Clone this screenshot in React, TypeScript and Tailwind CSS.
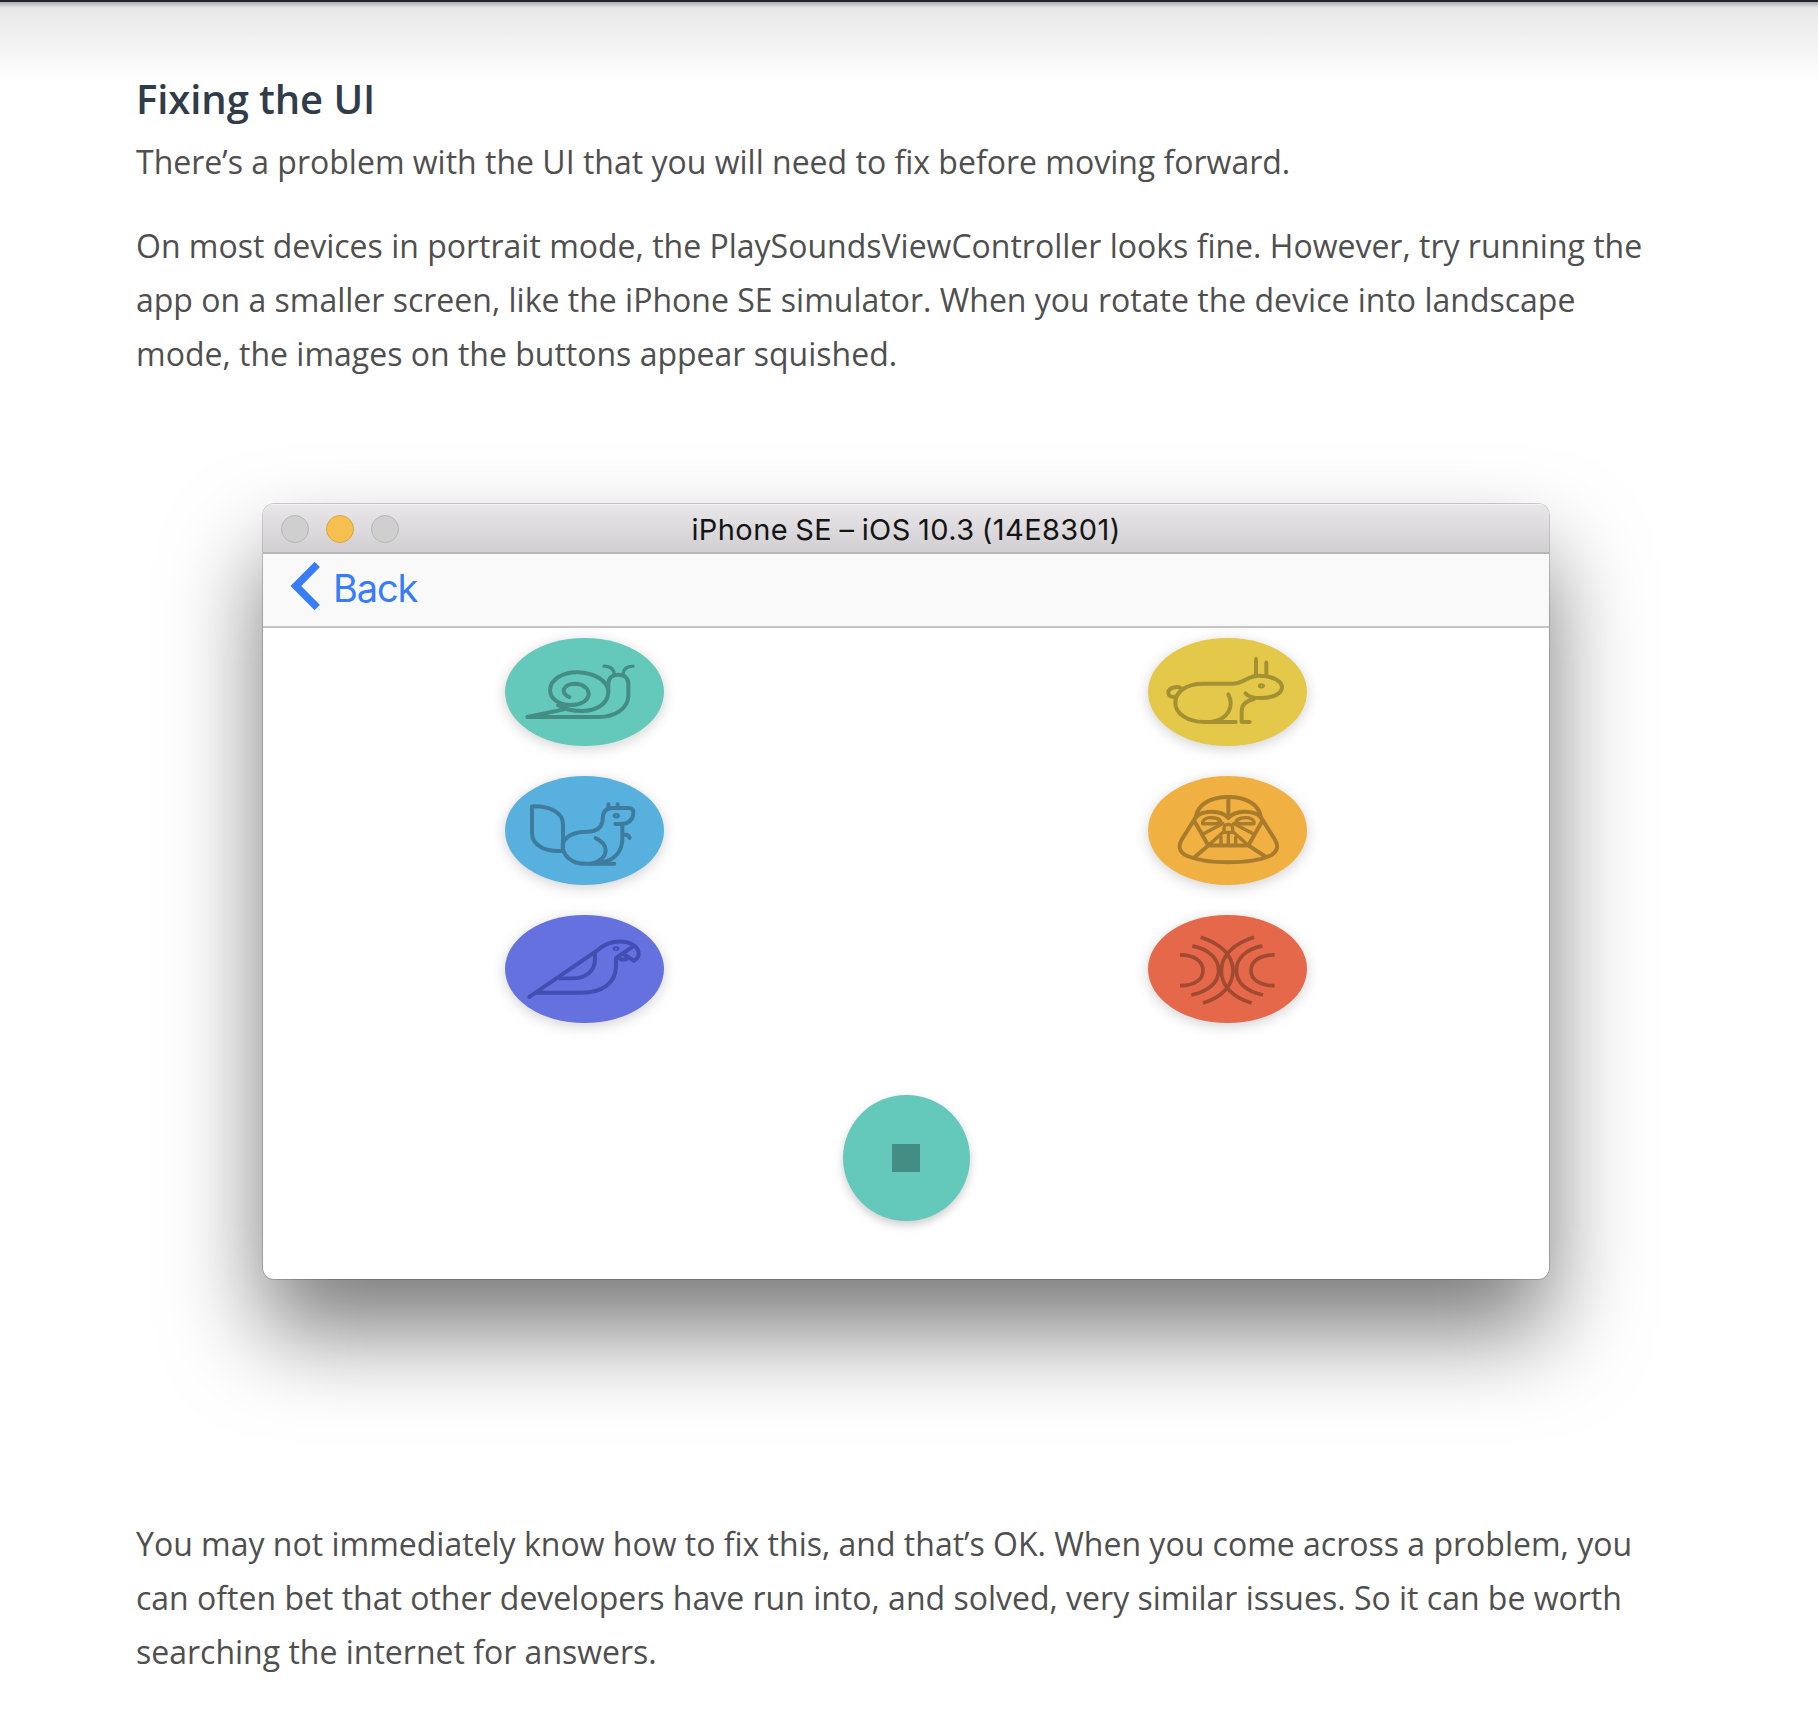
import type { ReactNode } from "react";

const stroke = {
  fill: "none",
  strokeWidth: 12,
  strokeLinecap: "round" as const,
  strokeLinejoin: "round" as const,
};

function EffectButton({
  label,
  tone,
  viewBox,
  color,
  children,
}: {
  label: string;
  tone: string;
  viewBox: string;
  color: string;
  children: ReactNode;
}) {
  return (
    <button
      aria-label={label}
      className={`block h-[108.5px] w-[159px] rounded-[50%] shadow-[0_3px_14px_rgba(0,0,0,0.18)] ${tone}`}
    >
      <svg viewBox={viewBox} preserveAspectRatio="none" className="block h-full w-full" stroke={color} {...stroke}>
        {children}
      </svg>
    </button>
  );
}

function Snail() {
  return (
    <EffectButton label="Slow" tone="bg-[#64c9bb]" viewBox="45 36 477 327" color="#448d82">
      <path d="M238 214C225 208 218 200 222 190C227 178 240 174 256 174C280 175 296 188 296 205C295 226 270 238 242 238C206 237 180 219 180 192C182 160 218 139 262 139C312 140 355 165 355 199C354 235 318 256 276 256C247 256 222 250 204 238" />
      <path d="M355 199V172C356 157 367 147 384 147C403 147 415 157 415 173V211C414 248 376 274 326 274H112L222 251" />
      <path strokeWidth="10" d="M373 147C372 131 363 121 342 121M399 147C400 131 409 121 429 121" />
    </EffectButton>
  );
}

function Squirrel() {
  return (
    <EffectButton label="High pitch" tone="bg-[#58b0df]" viewBox="45 33 477 325" color="#3e7c9d">
      <path d="M218 257C165 261 126 240 126 204V124C180 122 219 143 219 178V257" />
      <path d="M219 235C228 211 256 201 290 200C320 199 338 188 338 160C339 140 349 129 368 129H416C428 129 431 136 430 147C427 168 412 177 392 177H376" />
      <path d="M218 236C216 273 246 296 288 296H373" />
      <path d="M317 219C336 228 347 241 347 256C346 276 330 290 306 295M397 178V223C396 262 370 286 334 292" />
      <path d="M355 128V118M383 128V118M402 209C412 208 418 211 419 219" />
      <ellipse cx="379" cy="152" rx="5" ry="2" />
    </EffectButton>
  );
}

function Parrot() {
  return (
    <EffectButton label="Parrot" tone="bg-[#6571df]" viewBox="45 28 477 327" color="#434eb3">
      <path d="M118 275L323 134C341 118 362 108 389 108C424 108 446 124 446 145C446 154 441 161 432 166L402 147" />
      <path d="M432 121L378 157V185C376 233 337 262 274 262H140" />
      <path d="M315 147V162C315 196 287 219 248 219H208" />
      <path d="M388 156C391 164 405 165 414 158" />
      <ellipse cx="378" cy="129" rx="4" ry="1" />
    </EffectButton>
  );
}

function Rabbit() {
  return (
    <EffectButton label="Fast" tone="bg-[#e3c849]" viewBox="54 36 477 327" color="#a49133">
      <path d="M317 289H223C172 288 136 264 136 231C136 197 170 174 219 174H306C346 174 347 150 388 150C428 150 456 166 456 185C455 204 429 217 394 217C371 217 354 212 347 203" />
      <path d="M154 188C148 183 136 183 128 186C115 190 112 201 117 208C121 213 129 215 137 213" />
      <path d="M295 206C313 242 295 281 246 288M373 219C345 226 335 239 335 256V289H359M378 148V99M409 151V110" />
      <ellipse cx="394" cy="180" rx="5" ry="2" />
    </EffectButton>
  );
}

function DarkHelmet() {
  return (
    <EffectButton label="Low pitch" tone="bg-[#f0b042]" viewBox="54 33 477 325" color="#a97c2d">
      <path d="M295 96C239 96 203 119 197 157L155 224C143 245 149 262 170 272C229 298 362 298 420 272C441 262 447 245 435 224L393 157C387 119 351 96 295 96Z" />
      <path d="M295 96V159M197 157C218 134 274 134 295 159C316 134 372 134 393 157" />
      <path d="M194 169L235 241H355L396 169M235 241L196 274M355 241L406 274" />
      <g strokeWidth="10">
        <path d="M218 176C216 163 231 156 248 158C259 159 268 162 272 168C268 174 261 176 250 176ZM372 176C374 163 359 156 342 158C331 159 322 162 318 168C322 174 329 176 340 176Z" />
        <path d="M279 175L219 207M311 175L371 207M281 200L238 238M309 200L352 238" />
        <path d="M282 202V190C282 174 308 174 308 190V202M282 202H308M295 202V239M273 216V239M317 216V239" />
      </g>
    </EffectButton>
  );
}

function Echo() {
  return (
    <EffectButton label="Reverb" tone="bg-[#e46849]" viewBox="54 28 477 327" color="#a04a32">
      <g strokeLinecap="butt" strokeWidth="11">
        <path d="M150 148C193 148 219 167 219 195C219 223 193 241 150 241M187 121C237 131 266 160 266 195C266 231 235 259 184 269M212 95C272 113 309 151 309 195C309 240 276 276 219 293" />
        <path d="M434 148C390 148 363 167 363 195C363 223 390 241 434 241M397 121C347 131 319 160 319 195C319 231 349 259 399 269M372 95C312 113 274 151 274 195C274 240 307 276 365 293" />
      </g>
    </EffectButton>
  );
}

function SimulatorWindow() {
  return (
    <figure className="ml-[263px] mt-[123px] flex h-[775px] w-[1286px] flex-col overflow-hidden rounded-[11px] bg-white shadow-[0_0_0_1px_rgba(0,0,0,0.18),0_52px_94px_rgba(0,0,0,0.52)]">
      <div className="grid h-[50px] shrink-0 grid-cols-[1fr_auto_1fr] items-center border-b-2 border-b-[#b8b6b8] bg-linear-to-b from-[#e9e7e9] to-[#d1cfd1] shadow-[inset_0_1px_0_#f4f3f4]">
        <div className="flex gap-[17px] pl-[18px] pt-[2px]">
          <span className="size-7 rounded-full border border-[#b5b5b5] bg-[#cfcfcf]" />
          <span className="size-7 rounded-full border border-[#dda33f] bg-[#f5c04f]" />
          <span className="size-7 rounded-full border border-[#b5b5b5] bg-[#cfcfcf]" />
        </div>
        <figcaption className="pt-[3px] font-[Inter,sans-serif] text-[29px] leading-none tracking-[0.42px] [word-spacing:-1.3px] text-[#151415]">
          iPhone SE – iOS 10.3 (14E8301)
        </figcaption>
      </div>
      <div className="flex h-[74px] shrink-0 items-start border-b-2 border-b-[#c4c4c4] bg-[#f9f9f9] pl-7 pt-2">
        <svg viewBox="0 0 29 48" className="h-12 w-[29px]" fill="none" stroke="#387df7" strokeWidth="7.5">
          <path d="M26.3 2.4L4.9 24L26.3 45.6" />
        </svg>
        <span className="ml-[13px] mt-[6px] font-[Inter,sans-serif] text-[38px] leading-[40px] tracking-[-1.1px] text-[#387df7]">
          Back
        </span>
      </div>
      <div className="grid grid-cols-2 justify-items-center gap-y-[30px] pt-[9.5px]">
        <Snail />
        <Rabbit />
        <Squirrel />
        <DarkHelmet />
        <Parrot />
        <Echo />
      </div>
      <button
        aria-label="Stop"
        className="mx-auto mt-[72px] flex h-[126px] w-[127px] shrink-0 items-center justify-center rounded-full bg-[#64c9bb] shadow-[0_4px_10px_rgba(0,0,0,0.2)]"
      >
        <span className="size-[28px] bg-[#448d82]" />
      </button>
    </figure>
  );
}

export default function App() {
  return (
    <main className="h-[1710px] w-full overflow-hidden border-t-2 border-t-[#1f262f] bg-white bg-linear-to-b from-[#e6e6e6] to-white to-[80px] font-['Open_Sans',sans-serif]">
      <div className="h-1.5 bg-linear-to-b from-black/25 to-transparent" />
      <h2 className="ml-[136px] mt-[64px] text-[40px] font-semibold leading-[54px] tracking-[-0.08px] text-[#303c49]">
        Fixing the UI
      </h2>
      <div className="ml-[136px] mt-[9px] whitespace-nowrap text-[32px] leading-[54px] text-[#4f4f4f]">
        <p>There’s a problem with the UI that you will need to fix before moving forward.</p>
        <p className="mt-[30px]">
          On most devices in portrait mode, the PlaySoundsViewController looks fine. However, try running the
          <br />
          app on a smaller screen, like the iPhone SE simulator. When you rotate the device into landscape
          <br />
          mode, the images on the buttons appear squished.
        </p>
      </div>
      <SimulatorWindow />
      <p className="ml-[136px] mt-[238px] whitespace-nowrap text-[32px] leading-[54px] text-[#4f4f4f]">
        You may not immediately know how to fix this, and that’s OK. When you come across a problem, you
        <br />
        can often bet that other developers have run into, and solved, very similar issues. So it can be worth
        <br />
        searching the internet for answers.
      </p>
    </main>
  );
}
